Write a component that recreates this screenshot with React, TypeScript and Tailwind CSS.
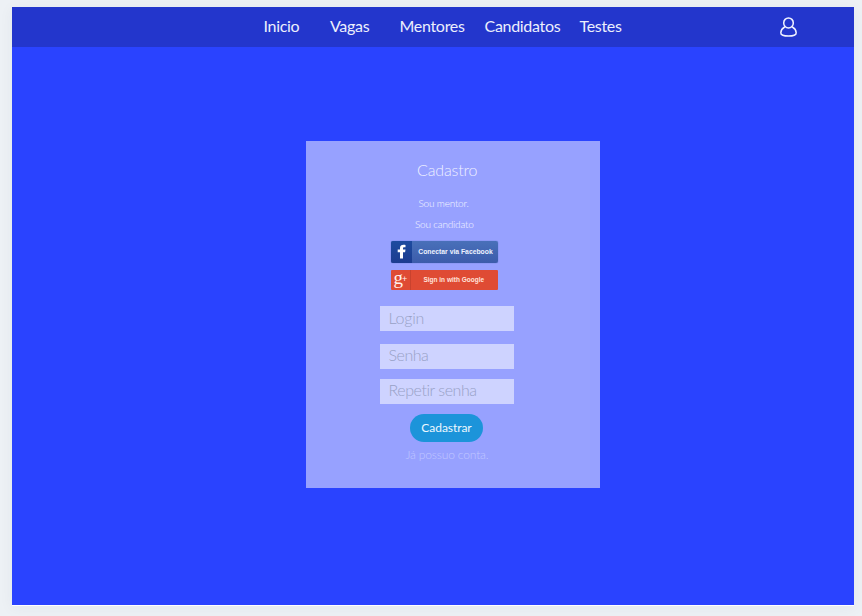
import React from "react";

const navItems = [
  { label: "Inicio", box: "w-[66.5px]" },
  { label: "Vagas", box: "w-[69.5px]" },
  { label: "Mentores", box: "w-[85px]" },
  { label: "Candidatos", box: "w-[95px]" },
  { label: "Testes", box: "w-[50px]" },
];

function UserIcon() {
  return (
    <svg className="h-[22px] w-[20px]" viewBox="0 0 20 22" fill="none" stroke="#f0f2ff" strokeWidth="1.5">
      <ellipse cx="9.5" cy="6.9" rx="4.8" ry="5" />
      <path d="M5.6 11C3.2 12.3 2 14.7 1.8 16.7c-.2 2.4 2.9 3.4 7.7 3.4s7.9-1 7.7-3.4c-.2-2-1.4-4.4-3.8-5.7" strokeLinecap="round" />
    </svg>
  );
}

function Header() {
  return (
    <header className="flex h-10 shrink-0 bg-[#2336cc] pl-[251.5px] text-[#eceffc]">
      <nav className="flex text-[16px] leading-[38px] tracking-[-0.3px] whitespace-nowrap">
        {navItems.map((item) => (
          <a key={item.label} className={item.box}>{item.label}</a>
        ))}
      </nav>
      <div className="ml-[149px] pt-[9px]">
        <UserIcon />
      </div>
    </header>
  );
}

function Field({ label, gap, tracking }: { label: string; gap: string; tracking: string }) {
  return (
    <div className={"w-[134px] shrink-0 bg-[#ced3ff] pl-[8.5px] text-[16px] font-light whitespace-nowrap text-[#98a1c6] " + gap + " " + tracking}>
      {label}
    </div>
  );
}

function SignUpCard() {
  return (
    <main className="mt-[94px] ml-[294px] flex h-[347px] w-[294px] flex-col bg-[#97a1ff] whitespace-nowrap">
      <h1 className="mt-[19px] ml-[111px] h-5 text-[16px] leading-5 font-light tracking-[-0.15px] text-[#eef0ff]">Cadastro</h1>
      <p className="mt-[16px] ml-[112.5px] h-[14px] text-[10px] leading-[14px] font-light tracking-[-0.2px] text-[#f6f7ff]">Sou mentor.</p>
      <p className="mt-[7px] ml-[109px] h-[14px] text-[10px] leading-[14px] font-light tracking-[-0.2px] text-[#f6f7ff]">Sou candidato</p>

      <button className="mt-[10px] ml-[85px] flex h-[22px] w-[107px] shrink-0 overflow-hidden rounded-[2px] bg-linear-to-b from-[#4970b9] to-[#3c5cab] shadow-[0_0_1px_#3450a0] [font-family:'Liberation_Sans',sans-serif]">
        <span className="h-full w-[21px] shrink-0 bg-linear-to-b from-[#1d4b9f] to-[#1c3c90]">
          <svg className="h-[22px] w-[21px]" viewBox="0 0 21 22" fill="#fff">
            <path d="M9 17.5V11.2H6.7V8.4H9V7.1C9 4.6 10.4 3.7 12.5 3.7c.9 0 1.7.1 2 .2v2.4h-1.3c-.9 0-1.2.4-1.2 1.2v.9h2.5l-.4 2.8H12v6.3Z" />
          </svg>
        </span>
        <span className="w-[86px] pl-[1px] text-center text-[6.8px] leading-[22px] font-bold text-[#edf1ff]">Conectar via Facebook</span>
      </button>
      <button className="mt-[7px] ml-[84.5px] flex h-[20px] w-[107.5px] shrink-0 rounded-[1px] bg-[#df4b34] [font-family:'Liberation_Sans',sans-serif]">
        <span className="flex h-full w-5 shrink-0 border-r border-[#c9422e] pl-[3px] text-[#fff0ec]">
          <span className="text-[19px] leading-[16px] [font-family:'Liberation_Serif',serif]">g</span>
          <span className="-ml-px text-[9px] leading-[19px]">+</span>
        </span>
        <span className="w-[88px] pr-px text-center text-[6.5px] leading-[20px] font-bold text-[#ffe3dc]">Sign in with Google</span>
      </button>

      <div className="ml-[74px] flex flex-col">
        <Field label="Login" gap="mt-[16px] h-[25px] leading-[23px]" tracking="tracking-[-0.25px]" />
        <Field label="Senha" gap="mt-[13px] h-[24.5px] leading-[22px]" tracking="tracking-[-0.45px]" />
        <Field label="Repetir senha" gap="mt-[10.5px] h-[24.5px] leading-[22px]" tracking="tracking-[-0.45px]" />
      </div>

      <button className="mt-[10.5px] ml-[104px] h-7 w-[73px] shrink-0 rounded-full bg-[#1c94da] pb-[2px] text-[12px] leading-[25px] tracking-[-0.05px] text-[#edf8ff]">Cadastrar</button>
      <a className="mt-[5px] ml-[99.5px] text-[12px] leading-4 font-light tracking-[-0.15px] text-[#c1c7ff]">Já possuo conta.</a>
    </main>
  );
}

export default function App() {
  return (
    <div className="h-[616px] w-[862px] overflow-hidden bg-[#edf1f5] pt-[7px] pl-3 [font-family:Lato,sans-serif]">
      <div className="flex h-[599px] w-[842px] flex-col border-b border-white bg-[#2a43ff] shadow-[0_2px_14px_rgba(30,50,80,0.05)]">
        <Header />
        <SignUpCard />
      </div>
    </div>
  );
}
